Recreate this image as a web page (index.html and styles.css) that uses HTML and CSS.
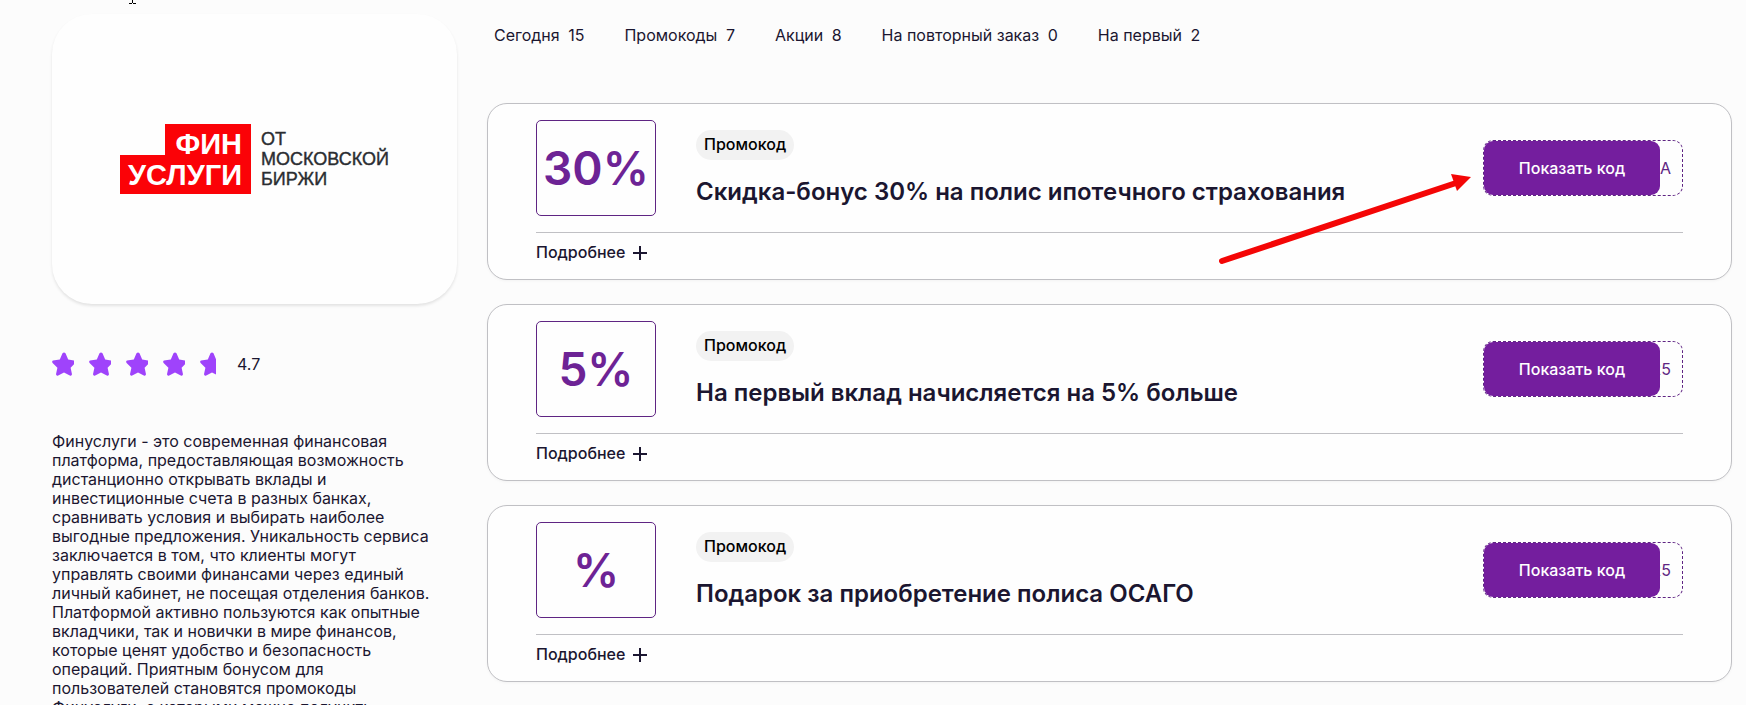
FILE: index.html
```html
<!DOCTYPE html>
<html lang="ru">
<head>
  <meta charset="UTF-8">
  <title>Промокоды Финуслуги</title>
  <meta name="viewport" content="width=device-width, initial-scale=1.0">
  <link rel="stylesheet" href="styles.css">
</head>
<body>
  <svg class="cursor" width="7" height="4" viewBox="0 0 7 4" aria-hidden="true">
    <path d="M3.5 0v3M0 3.5h3M4 3.5h3" fill="none" stroke="#000" stroke-width="1"/>
  </svg>

  <div class="page">
    <aside class="sidebar">
      <div class="logo-card">
        <svg class="logo" width="270" height="70" viewBox="0 0 270 70" role="img" aria-label="Финуслуги от Московской биржи">
          <path d="M45 0h86v70H0V31h45z" fill="#fb0207"/>
          <text class="logo-main" x="122" y="30" text-anchor="end">ФИН</text>
          <text class="logo-main" x="122" y="61" text-anchor="end">УСЛУГИ</text>
          <text class="logo-sub" x="141" y="21">ОТ</text>
          <text class="logo-sub" x="141" y="41">МОСКОВСКОЙ</text>
          <text class="logo-sub" x="141" y="61">БИРЖИ</text>
        </svg>
      </div>

      <div class="rating">
        <svg class="star" viewBox="0 0 22 24"><use href="#star"/></svg>
        <svg class="star" viewBox="0 0 22 24"><use href="#star"/></svg>
        <svg class="star" viewBox="0 0 22 24"><use href="#star"/></svg>
        <svg class="star" viewBox="0 0 22 24"><use href="#star"/></svg>
        <svg class="star star-part" viewBox="0 0 22 24">
          <path id="star" d="M10.5 1.2Q12 -.4 13.5 1.2L16.200 7.600L23 8.600Q24.500 9.500 23.400 11L18.600 15.700L20 22.200Q19.700 24.200 17.800 23.500L12 20.400L6.200 23.500Q4.300 24.200 4 22.200L5.400 15.700L.6 11Q-.5 9.500 1 8.600L7.800 7.600Z"/>
        </svg>
        <span>4.7</span>
      </div>

      <p class="about">Финуслуги - это современная финансовая платформа, предоставляющая возможность дистанционно открывать вклады и инвестиционные счета в разных банках, сравнивать условия и выбирать наиболее выгодные предложения. Уникальность сервиса заключается в том, что клиенты могут управлять своими финансами через единый личный кабинет, не посещая отделения банков. Платформой активно пользуются как опытные вкладчики, так и новички в мире финансов, которые ценят удобство и безопасность операций. Приятным бонусом для пользователей становятся промокоды Финуслуги, с которыми можно получить</p>
    </aside>

    <main class="content">
      <nav class="filters">
        <a href="#">Сегодня <span>15</span></a>
        <a href="#">Промокоды <span>7</span></a>
        <a href="#">Акции <span>8</span></a>
        <a href="#">На повторный заказ <span>0</span></a>
        <a href="#">На первый <span>2</span></a>
      </nav>

      <div class="coupons">
        <article class="coupon">
          <div class="coupon-top">
            <div class="discount">30%</div>
            <div class="coupon-info">
              <span class="badge">Промокод</span>
              <h2>Скидка-бонус 30% на полис ипотечного страхования</h2>
            </div>
            <div class="code">
              <button type="button" class="code-button">Показать код</button>
              <span>A</span>
            </div>
          </div>
          <button type="button" class="more">Подробнее
            <svg width="14" height="14" viewBox="0 0 14 14"><path d="M7 0v14M0 7h14"/></svg>
          </button>
          <svg class="arrow" width="256" height="92" viewBox="0 0 256 92" aria-hidden="true">
            <path d="M6 87L240 9" fill="none" stroke="#f40606" stroke-width="6" stroke-linecap="round"/>
            <path d="M235 0L255 3L241 17Z" fill="#f40606"/>
          </svg>
        </article>

        <article class="coupon">
          <div class="coupon-top">
            <div class="discount">5%</div>
            <div class="coupon-info">
              <span class="badge">Промокод</span>
              <h2>На первый вклад начисляется на 5% больше</h2>
            </div>
            <div class="code">
              <button type="button" class="code-button">Показать код</button>
              <span>25</span>
            </div>
          </div>
          <button type="button" class="more">Подробнее
            <svg width="14" height="14" viewBox="0 0 14 14"><path d="M7 0v14M0 7h14"/></svg>
          </button>
        </article>

        <article class="coupon">
          <div class="coupon-top">
            <div class="discount">%</div>
            <div class="coupon-info">
              <span class="badge">Промокод</span>
              <h2>Подарок за приобретение полиса ОСАГО</h2>
            </div>
            <div class="code">
              <button type="button" class="code-button">Показать код</button>
              <span>25</span>
            </div>
          </div>
          <button type="button" class="more">Подробнее
            <svg width="14" height="14" viewBox="0 0 14 14"><path d="M7 0v14M0 7h14"/></svg>
          </button>
        </article>
      </div>
    </main>
  </div>
</body>
</html>
```
FILE: styles.css
```css
* {
  box-sizing: border-box;
}

html {
  height: 100%;
  overflow: hidden;
}

body {
  margin: 0;
  height: 100%;
  overflow: hidden;
  font-family: Inter, Roboto, sans-serif;
  font-size: 16px;
  line-height: 19px;
  color: #1b1630;
  background: #fcfcfc;
}

.page {
  display: flex;
  gap: 30px;
  padding: 14px 14px 0 52px;
}

/* left column */
.sidebar {
  flex: none;
  width: 405px;
}

.logo-card {
  display: flex;
  align-items: center;
  justify-content: center;
  height: 290px;
  border-radius: 40px;
  background: #fefefe;
  box-shadow: 0 2px 3px rgba(0, 0, 0, 0.1);
}

.logo-main {
  font-family: "Liberation Sans", Arial, sans-serif;
  font-size: 29px;
  font-weight: bold;
  fill: #fff;
}

.logo-sub {
  font-family: "Liberation Sans", Arial, sans-serif;
  font-size: 18px;
  fill: #2a2d31;
  stroke: #2a2d31;
  stroke-width: 0.4px;
}

.rating {
  display: flex;
  align-items: center;
  gap: 15px;
  margin-top: 48px;
}

.star {
  width: 22px;
  height: 24px;
  fill: #9f43fb;
}

.star-part {
  clip-path: inset(0 6px 0 0);
}

.about {
  width: 380px;
  margin: 56px 0 0;
}

/* right column */
.content {
  flex: 1;
  min-width: 0;
}

.filters {
  display: flex;
  gap: 40px;
  padding: 12px 7px 10px;
}

.filters a {
  color: inherit;
  text-decoration: none;
}

.filters span {
  margin-left: 4px;
}

.coupons {
  display: flex;
  flex-direction: column;
  gap: 24px;
  margin-top: 48px;
}

.coupon {
  position: relative;
  padding: 16px 48px;
  border: 1px solid #c0c0c4;
  border-radius: 20px;
  background: #fefefe;
  box-shadow: 0 1px 3px rgba(0, 0, 0, 0.04);
}

.coupon-top {
  display: flex;
  align-items: center;
  padding-bottom: 16px;
  border-bottom: 1px solid #c0c0c4;
}

.discount {
  display: flex;
  align-items: center;
  justify-content: center;
  min-width: 120px;
  height: 96px;
  padding: 0 6px;
  border: 1px solid #5f2583;
  border-radius: 5px;
  font-size: 46px;
  font-weight: 600;
  color: #6d2395;
}

.coupon-info {
  flex: 1;
  margin-left: 40px;
}

.badge {
  display: inline-block;
  padding: 5px 8px 6px;
  border-radius: 15px;
  font-weight: 500;
  color: #000;
  background: #f2f2f2;
}

.coupon h2 {
  margin: 17px 0 0;
  font-size: 24px;
  font-weight: 600;
  line-height: 30px;
}

.code {
  position: relative;
  display: flex;
  align-items: center;
  justify-content: flex-end;
  width: 200px;
  height: 56px;
  padding-right: 11px;
  border: 1px dashed #5f2583;
  border-radius: 10px;
  color: #5f2583;
}

/* covers the hidden part of the code */
.code-button {
  position: absolute;
  top: 0;
  left: 0;
  width: 176px;
  height: 54px;
  border: none;
  border-radius: 9px;
  font: inherit;
  font-weight: 500;
  color: #fff;
  background: #741e9e;
  cursor: pointer;
}

.more {
  display: flex;
  align-items: center;
  gap: 8px;
  margin: 10px 0 1px;
  padding: 0;
  border: none;
  font: inherit;
  font-weight: 500;
  color: inherit;
  background: none;
  cursor: pointer;
}

.more svg {
  fill: none;
  stroke: #1b1630;
  stroke-width: 2;
}

.arrow {
  position: absolute;
  top: 70px;
  right: 259px;
}

.cursor {
  position: absolute;
  top: 0;
  left: 129px;
}
```
